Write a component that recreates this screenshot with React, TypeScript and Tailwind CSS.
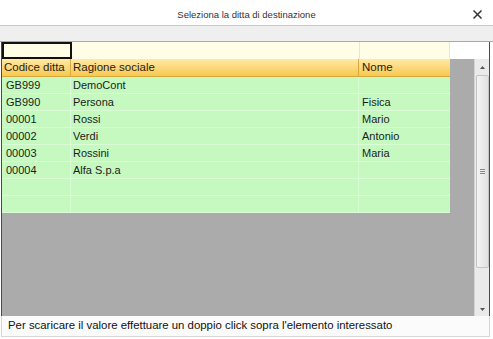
import React from 'react';

const rows = [
  { code: 'GB999', name: 'DemoCont', nome: '' },
  { code: 'GB990', name: 'Persona', nome: 'Fisica' },
  { code: '00001', name: 'Rossi', nome: 'Mario' },
  { code: '00002', name: 'Verdi', nome: 'Antonio' },
  { code: '00003', name: 'Rossini', nome: 'Maria' },
  { code: '00004', name: 'Alfa S.p.a', nome: '' },
  { code: '', name: '', nome: '' },
  { code: '', name: '', nome: '' },
];

export default function App() {
  return (
    <div className="w-[493px] h-[339px] bg-white flex flex-col overflow-hidden text-[#1c1c1c]" style={{ fontFamily: '"Liberation Sans", Arial, sans-serif' }}>
      {/* title bar */}
      <div className="h-[26px] shrink-0 flex items-center justify-center relative border-b border-[#c9c9c9] bg-white">
        <span className="text-[9.5px] text-[#333] pt-[6px]">Seleziona la ditta di destinazione</span>
        <svg className="absolute right-[11px] top-[10px]" width="9" height="9" viewBox="0 0 9 9">
          <path d="M1 1 L8 8 M8 1 L1 8" stroke="#333" strokeWidth="1.5" strokeLinecap="square" />
        </svg>
      </div>

      {/* toolbar band */}
      <div className="h-[16px] shrink-0 bg-[#efefef] border-b border-[#a9a9a9]" />

      {/* grid */}
      <div className="flex-1 flex flex-col ml-[1px] mr-[3px] border-l border-r border-[#4a4a4a]">
        {/* filter row */}
        <div className="h-[17px] shrink-0 flex bg-white">
          <div className="w-[70px] border-2 border-[#111] bg-[#fffde6]" />
          <div className="w-[288px] border-r border-[#ebe6cc] bg-[#fffde6]" />
          <div className="w-[90px] border-r border-[#e6e6e6] bg-[#fffde6]" />
          <div className="flex-1 bg-white" />
        </div>

        <div className="flex-1 flex">
          <div className="flex-1 bg-[#ababab]">
            <div className="w-[448px]">
              {/* header */}
              <div className="h-[18px] flex text-[11.5px] text-[#2a2210] bg-gradient-to-b from-[#ffe9a6] to-[#f7c84a] border-b border-[#d9a83a]">
                <div className="w-[69px] pl-[2px] flex items-center border-r border-[#d9ab3e]">Codice ditta</div>
                <div className="w-[288px] pl-[2px] flex items-center border-r border-[#d9ab3e]">Ragione sociale</div>
                <div className="flex-1 pl-[3px] flex items-center">Nome</div>
              </div>
              {rows.map((r, i) => (
                <div key={i} className="h-[17px] flex text-[11px] bg-[#c5f9c0] border-b border-[#dafbd5]">
                  <div className="w-[69px] pl-[4px] flex items-center border-r border-[#dafbd5]">{r.code}</div>
                  <div className="w-[288px] pl-[2px] flex items-center border-r border-[#dafbd5]">{r.name}</div>
                  <div className="flex-1 pl-[3px] flex items-center">{r.nome}</div>
                </div>
              ))}
            </div>
          </div>

          {/* scrollbar */}
          <div className="w-[15px] bg-[#eaeaea] border-l border-[#d4d4d4] flex flex-col items-center">
            <div className="h-[16px] flex items-center justify-center">
              <svg width="5" height="3" viewBox="0 0 5 3"><path d="M0 3 L2.5 0 L5 3 Z" fill="#555" /></svg>
            </div>
            <div className="w-[13px] h-[193px] bg-gradient-to-r from-[#f4f4f4] to-[#e0e0e0] border border-[#c4c4c4] rounded-[2px] flex items-center justify-center">
              <div className="flex flex-col gap-[1px]">
                <div className="w-[5px] h-[1px] bg-[#8a8a8a]" />
                <div className="w-[5px] h-[1px] bg-[#8a8a8a]" />
                <div className="w-[5px] h-[1px] bg-[#8a8a8a]" />
              </div>
            </div>
            <div className="flex-1" />
            <div className="h-[14px] flex items-center justify-center">
              <svg width="5" height="3" viewBox="0 0 5 3"><path d="M0 0 L2.5 3 L5 0 Z" fill="#555" /></svg>
            </div>
          </div>
        </div>
      </div>

      {/* footer */}
      <div className="h-[21px] shrink-0 flex items-center pl-[6px] ml-[1px] mr-[3px] border-l border-r border-b border-[#d6d6d6] bg-[#fbfbfb] text-[11.4px] text-[#111]">
        Per scaricare il valore effettuare un doppio click sopra l'elemento interessato
      </div>
      <div className="h-[2px] shrink-0" />
    </div>
  );
}
